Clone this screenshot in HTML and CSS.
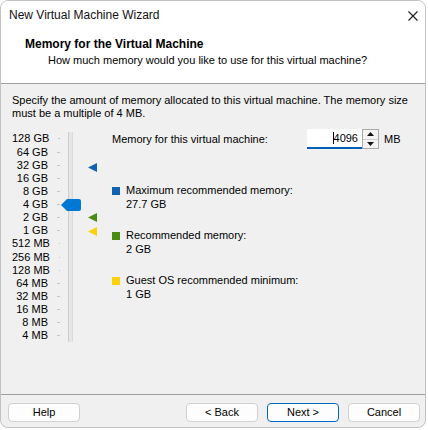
FILE: index.html
```html
<!DOCTYPE html>
<html lang="en">
<head>
<meta charset="utf-8">
<title>New Virtual Machine Wizard</title>
<link rel="stylesheet" href="styles.css">
</head>
<body>
<div class="window">
  <div class="titlebar">
    <span class="title">New Virtual Machine Wizard</span>
    <svg class="close" viewBox="0 0 10 10"><path d="M0.5 0.5 L9.5 9.5 M9.5 0.5 L0.5 9.5" stroke="#1b1b1b" stroke-width="1.1" fill="none"/></svg>
  </div>
  <div class="header">
    <div class="h-title">Memory for the Virtual Machine</div>
    <div class="h-sub">How much memory would you like to use for this virtual machine?</div>
  </div>
  <div class="content">
    <p class="desc">Specify the amount of memory allocated to this virtual machine. The memory size<br>must be a multiple of 4 MB.</p>
    <div class="main">
      <div class="slider">
        <ul class="scale">
          <li>128 GB</li><li>64 GB</li><li>32 GB</li><li>16 GB</li><li>8 GB</li><li>4 GB</li><li>2 GB</li><li>1 GB</li>
          <li>512 MB</li><li>256 MB</li><li>128 MB</li><li>64 MB</li><li>32 MB</li><li>16 MB</li><li>8 MB</li><li>4 MB</li>
        </ul>
        <div class="track"></div>
        <svg class="thumb" width="20" height="12" viewBox="0 0 20 12"><path d="M0 6 L6 0 H18 Q20 0 20 2 V10 Q20 12 18 12 H6 Z" fill="#0078d4"/></svg>
        <svg class="marker m-max" width="9" height="9" viewBox="0 0 9 9"><path d="M0 4.5 L9 0 V9 Z" fill="#0f62b0"/></svg>
        <svg class="marker m-rec" width="9" height="9" viewBox="0 0 9 9"><path d="M0 4.5 L9 0 V9 Z" fill="#4a8b14"/></svg>
        <svg class="marker m-min" width="9" height="9" viewBox="0 0 9 9"><path d="M0 4.5 L9 0 V9 Z" fill="#fcd20c"/></svg>
      </div>
      <div class="panel">
        <div class="mem-row">
          <span class="mem-label">Memory for this virtual machine:</span>
          <div class="input"><span class="value">4096</span></div>
          <div class="spinbtns">
            <span class="sb"><svg width="7" height="4" viewBox="0 0 7 4"><path d="M3.5 0 L7 4 H0 Z" fill="#111"/></svg></span>
            <span class="sb"><svg width="7" height="4" viewBox="0 0 7 4"><path d="M0 0 H7 L3.5 4 Z" fill="#111"/></svg></span>
          </div>
          <span class="unit">MB</span>
        </div>
        <div class="legend">
          <div class="legend-item"><span class="swatch sw-max"></span><span>Maximum recommended memory:</span><span class="val">27.7 GB</span></div>
          <div class="legend-item"><span class="swatch sw-rec"></span><span>Recommended memory:</span><span class="val">2 GB</span></div>
          <div class="legend-item"><span class="swatch sw-min"></span><span>Guest OS recommended minimum:</span><span class="val">1 GB</span></div>
        </div>
      </div>
    </div>
  </div>
  <div class="footer">
    <button class="btn">Help</button>
    <button class="btn back">&lt; Back</button>
    <button class="btn primary">Next &gt;</button>
    <button class="btn">Cancel</button>
  </div>
</div>
</body>
</html>
```
FILE: styles.css
```css
* { box-sizing: border-box; }
html, body { margin: 0; background: #fff; }
body {
  font-family: "Liberation Sans", Arial, sans-serif;
  font-size: 11px;
  color: #000;
}
.window {
  width: 426px;
  height: 428px;
  border: 1px solid #c2c2c2;
  border-radius: 8px;
  overflow: hidden;
  display: flex;
  flex-direction: column;
  background: #f0f0f0;
}
.titlebar {
  height: 29px;
  flex: none;
  background: #fff;
  display: flex;
  align-items: center;
  justify-content: space-between;
  padding: 0 7px 0 8px;
}
.title { font-size: 12px; line-height: 29px; color: #111; }
.close { width: 10px; height: 10px; }
.header {
  height: 54px;
  flex: none;
  background: #fff;
  border-bottom: 1px solid #a0a0a0;
  padding: 7px 0 0 24px;
}
.h-title { font-weight: bold; font-size: 12px; line-height: 14px; }
.h-sub { font-size: 11px; line-height: 13px; margin: 3px 0 0 23px; }
.content { flex: 1; padding: 10px 0 0 11px; }
.desc { margin: 0; line-height: 13px; }
.main { display: flex; margin-top: 9px; }
.slider {
  position: relative;
  display: flex;
  align-items: stretch;
  width: 100px;
  flex: none;
  padding-top: 3.4px;
}
.scale { list-style: none; margin: 0; padding: 0; width: 48px; }
.scale li {
  display: flex;
  justify-content: flex-end;
  align-items: center;
  height: 13.13px;
  line-height: 13.13px;
  white-space: nowrap;
}
.scale li::after {
  content: "";
  width: 3px;
  height: 1px;
  background: #c4c4c4;
  margin-left: 9px;
}
.track {
  width: 5px;
  margin-left: 8px;
  background: #e6e6e6;
  border-left: 1px solid #cdcdcd;
  border-right: 1px solid #dadada;
}
.thumb { position: absolute; left: 49px; top: 70px; }
.marker { position: absolute; left: 76px; }
.m-max { top: 34px; }
.m-rec { top: 84px; }
.m-min { top: 98px; }
.panel { flex: 1; }
.mem-row { display: flex; align-items: center; height: 20px; }
.mem-label { flex: 0 0 195px; }
.input {
  width: 55px;
  height: 20px;
  background: #fff;
  border-bottom: 2px solid #005fb8;
  text-align: right;
  padding-right: 4px;
  line-height: 18px;
}
.value::before {
  content: "";
  display: inline-block;
  width: 1px;
  height: 12px;
  background: #000;
  vertical-align: -2px;
}
.spinbtns {
  width: 17px;
  height: 20px;
  border: 1px solid #a9a9a9;
  background: #f3f3f3;
  display: flex;
  flex-direction: column;
}
.sb { flex: 1; display: flex; align-items: center; justify-content: center; }
.sb + .sb { border-top: 1px solid #cfcfcf; }
.sb svg { display: block; }
.unit { margin-left: 5px; }
.legend { margin-top: 34px; }
.legend-item {
  display: grid;
  grid-template-columns: 14px auto;
  line-height: 14px;
}
.legend-item + .legend-item { margin-top: 17px; }
.swatch { width: 8px; height: 8px; margin-top: 4px; }
.val { grid-column: 2; }
.sw-max { background: #0f62b0; }
.sw-rec { background: #4a8b14; }
.sw-min { background: #fcd20c; }
.footer {
  height: 33px;
  flex: none;
  border-top: 1px solid #a0a0a0;
  padding: 8px 5px 0 7px;
  display: flex;
  align-items: flex-start;
  gap: 9px;
}
.btn {
  width: 72px;
  height: 19px;
  border: 1px solid #d0d0d0;
  border-radius: 4px;
  background: #fdfdfd;
  font-family: "Liberation Sans", Arial, sans-serif;
  font-size: 11px;
  color: #000;
  padding: 0;
  line-height: 17px;
}
.back { margin-left: auto; }
.primary { border-color: #0067c0; }
```
